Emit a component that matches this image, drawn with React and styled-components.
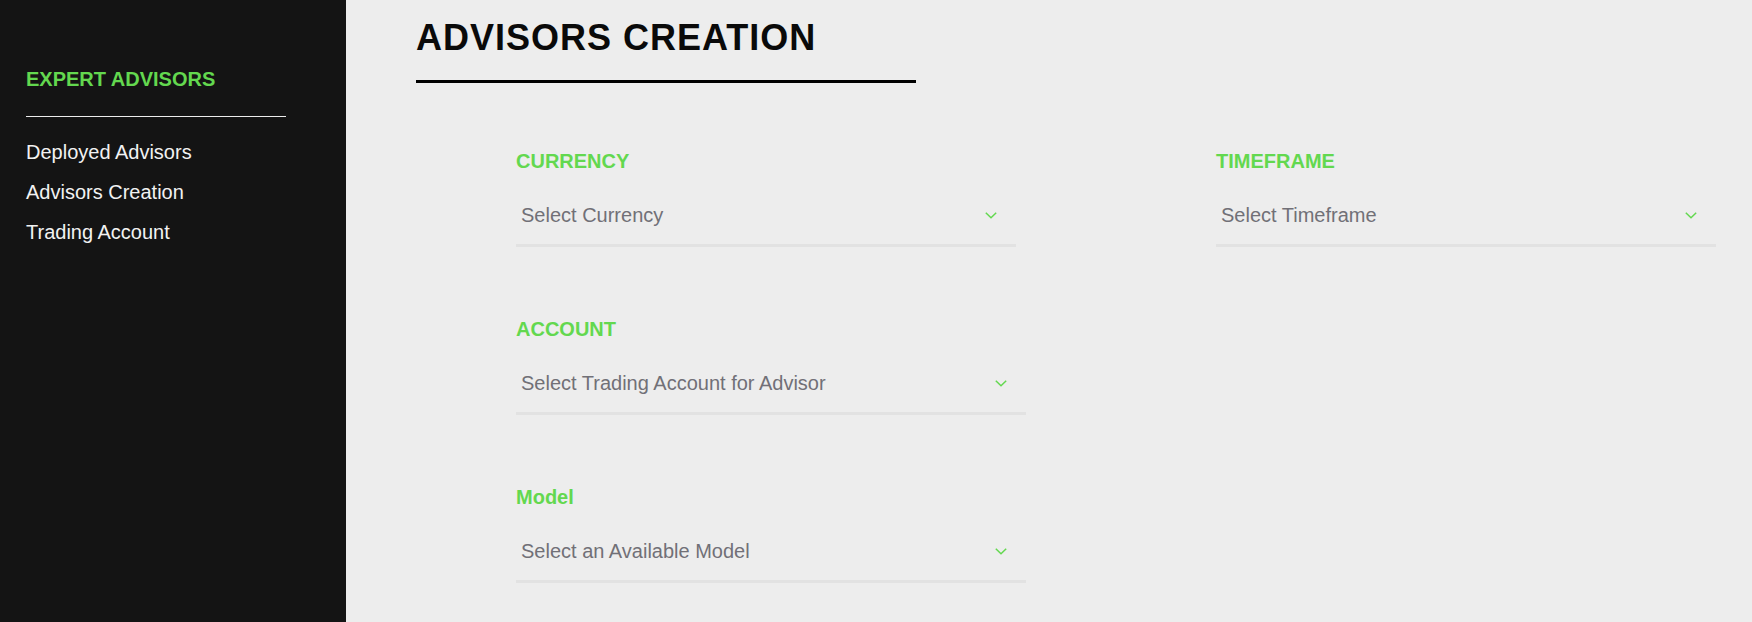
import React from "react";
import styled, { createGlobalStyle } from "styled-components";

const GlobalStyle = createGlobalStyle`
    html, body { margin:0; padding:0; }
    body { font-family: "Liberation Sans", Arial, sans-serif; background:#ededed; }
    * { box-sizing: border-box; }
`;

const Layout = styled.div`
    display:flex; min-height:100vh;
`;

const Sidebar = styled.aside`
    width:346px; flex-shrink:0; background:#141414; padding:68px 60px 0 26px;
`;

const SideHeading = styled.h2`
    margin:0; font-size:20px; line-height:23px; font-weight:700; color:#63d84f;
`;

const Divider = styled.hr`
    margin:25px 0 15px 0; border:none; height:1px; background:#ececec;
`;

const NavList = styled.nav`
    display:flex; flex-direction:column;
`;

const NavLink = styled.a`
    font-size:20px; line-height:40px; color:#f2f2f2; text-decoration:none; cursor:pointer;
`;

const Main = styled.main`
    flex:1; padding:17px 0 0 70px;
`;

const Title = styled.h1`
    margin:0; width:500px; padding-bottom:22px; border-bottom:3px solid #000;
    font-size:36px; line-height:41px; font-weight:700; color:#0a0a0a; letter-spacing:1px;
`;

const Form = styled.div`
    display:grid; grid-template-columns:700px 500px; row-gap:71px;
    margin:67px 0 0 100px;
`;

const Field = styled.div`
    width:${(p) => p.$width}px;
    grid-column:${(p) => p.$col || "auto"};
`;

const Label = styled.label`
    display:block; font-size:20px; line-height:22px; font-weight:700; color:#63d84f;
`;

const SelectBox = styled.div`
    margin-top:14px; height:61px; display:flex; align-items:center; justify-content:space-between;
    padding:0 19px 0 5px; border-bottom:3px solid #e2e2e2; cursor:pointer;
`;

const Placeholder = styled.span`
    font-size:20px; color:#717077;
`;

const Chevron = () => (
    <svg width="12" height="7" viewBox="0 0 12 7" fill="none">
        <path d="M0.8 0.8 L6 5.8 L11.2 0.8" stroke="#63d84f" strokeWidth="1.5" />
    </svg>
);

const fields = [
    { label: "CURRENCY", placeholder: "Select Currency", width: 500 },
    { label: "TIMEFRAME", placeholder: "Select Timeframe", width: 500 },
    { label: "ACCOUNT", placeholder: "Select Trading Account for Advisor", width: 510, col: 1 },
    { label: "Model", placeholder: "Select an Available Model", width: 510, col: 1 },
];

export default function App() {
    return (
        <>
            <GlobalStyle />
            <Layout>
                <Sidebar>
                    <SideHeading>EXPERT ADVISORS</SideHeading>
                    <Divider />
                    <NavList>
                        <NavLink>Deployed Advisors</NavLink>
                        <NavLink>Advisors Creation</NavLink>
                        <NavLink>Trading Account</NavLink>
                    </NavList>
                </Sidebar>
                <Main>
                    <Title>ADVISORS CREATION</Title>
                    <Form>
                        {fields.map((f) => (
                            <Field key={f.label} $width={f.width} $col={f.col}>
                                <Label>{f.label}</Label>
                                <SelectBox>
                                    <Placeholder>{f.placeholder}</Placeholder>
                                    <Chevron />
                                </SelectBox>
                            </Field>
                        ))}
                    </Form>
                </Main>
            </Layout>
        </>
    );
}
